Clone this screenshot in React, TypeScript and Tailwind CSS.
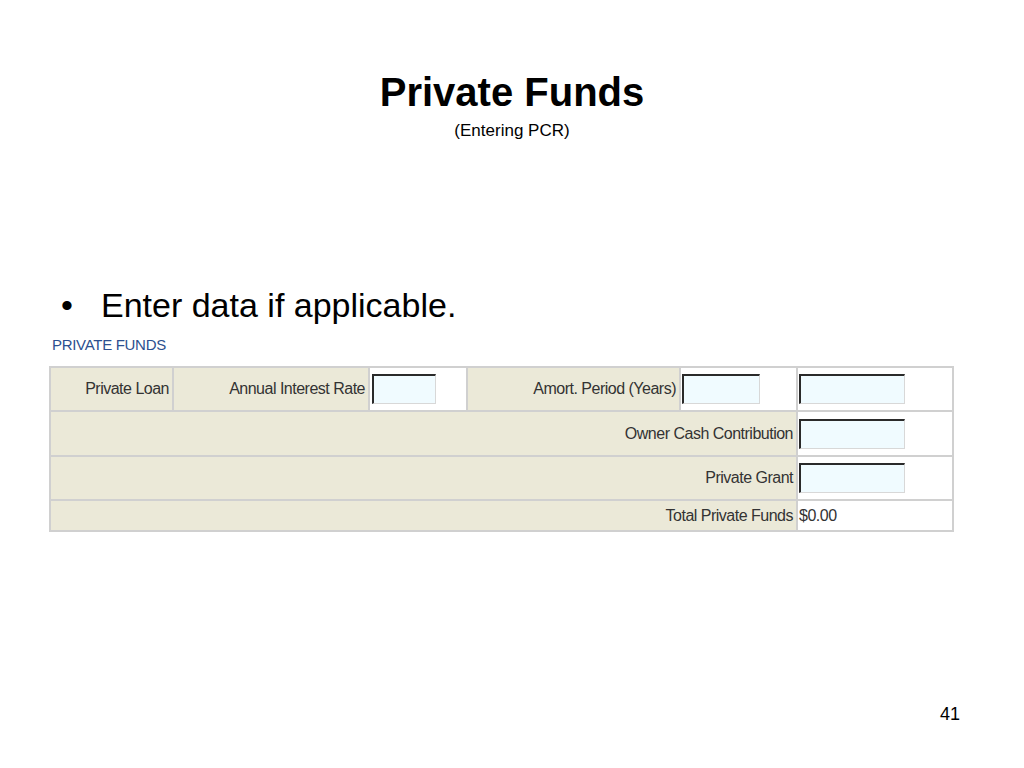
const font = { fontFamily: '"Liberation Sans", Arial, sans-serif' }

const Input = ({ w }: { w: string }) => (
	<div
		className={`${w} h-[30px] bg-[#f0fbff] border-t-2 border-l-2 border-b border-r border-t-[#2a2a2a] border-l-[#2a2a2a] border-b-[#d8d8d8] border-r-[#d8d8d8]`}
	/>
)

const Label = ({
	children,
	span,
}: {
	children?: React.ReactNode
	span?: number
}) => (
	<td colSpan={span} className="bg-[#ebe9d8] text-right align-middle pr-[3px] whitespace-nowrap">
		{children}
	</td>
)

const App = () => {
	return (
		<div className="w-[1024px] h-[768px] bg-white text-black flex flex-col relative" style={font}>
			<div className="flex flex-col items-center pt-[68px]">
				<h1 className="text-[40px] leading-[48px] font-bold">Private Funds</h1>
				<p className="text-[17px] leading-[20px] mt-[5px]">(Entering PCR)</p>
			</div>

			<div className="flex items-center mt-[144px] ml-[61px] text-[34px] leading-[40px]">
				<span className="w-[40px]">•</span>
				<span>Enter data if applicable.</span>
			</div>

			<div className="ml-[52px] mt-[12px] text-[15px] leading-[16px] text-[#2c4f8f] tracking-[-0.3px]">
				PRIVATE FUNDS
			</div>

			<table className="ml-[49px] mt-[13px] w-[905px] table-fixed border-separate border-spacing-[2px] bg-[#d0d0d0] text-[16px] tracking-[-0.5px] text-[#333]">
				<colgroup>
					<col className="w-[121px]" />
					<col className="w-[194px]" />
					<col className="w-[96px]" />
					<col className="w-[211px]" />
					<col className="w-[115px]" />
					<col className="w-[154px]" />
				</colgroup>
				<tbody>
					<tr className="h-[42px]">
						<Label>Private Loan</Label>
						<Label>Annual Interest Rate</Label>
						<td className="bg-white align-middle pl-[2px]">
							<Input w="w-[64px]" />
						</td>
						<Label>Amort. Period (Years)</Label>
						<td className="bg-white align-middle pl-[1px]">
							<Input w="w-[78px]" />
						</td>
						<td className="bg-white align-middle pl-[1px]">
							<Input w="w-[106px]" />
						</td>
					</tr>
					<tr className="h-[43px]">
						<Label span={5}>Owner Cash Contribution</Label>
						<td className="bg-white align-middle pl-[1px]">
							<Input w="w-[106px]" />
						</td>
					</tr>
					<tr className="h-[42px]">
						<Label span={5}>Private Grant</Label>
						<td className="bg-white align-middle pl-[1px]">
							<Input w="w-[106px]" />
						</td>
					</tr>
					<tr className="h-[29px]">
						<Label span={5}>Total Private Funds</Label>
						<td className="bg-white align-middle pl-[1px]">$0.00</td>
					</tr>
				</tbody>
			</table>

			<div className="absolute right-[64px] bottom-[40px] text-[18px]">41</div>
		</div>
	)
}

export default App
